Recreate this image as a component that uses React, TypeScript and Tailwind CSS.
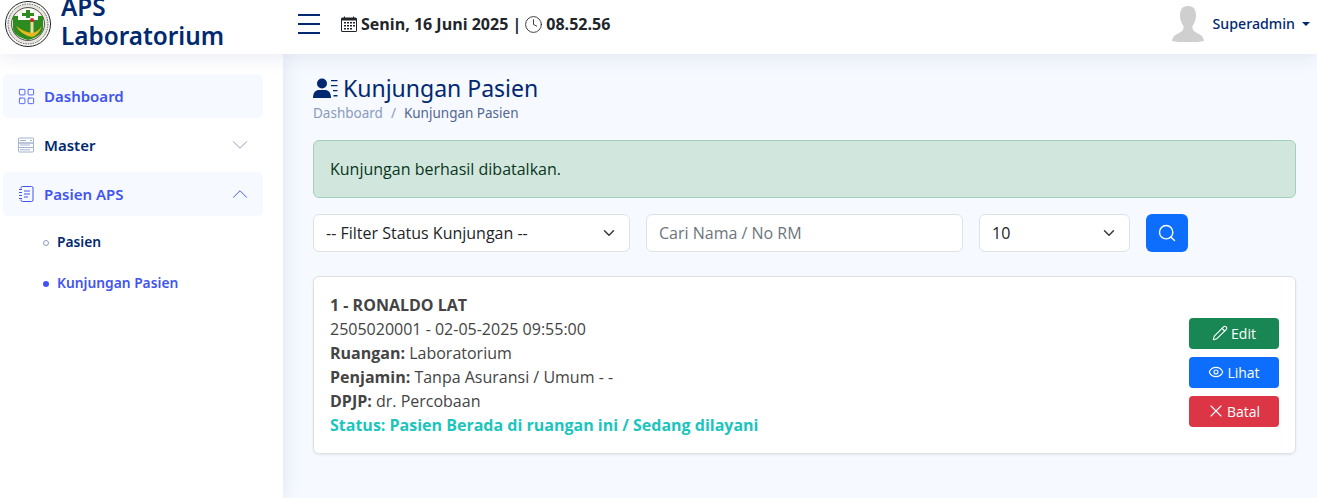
import React from "react";
import { LayoutGrid, ChevronDown, ChevronUp, Search, Pencil, Eye, X, Clock } from "lucide-react";

const nunito = "[font-family:'Noto_Sans','Open_Sans',sans-serif]";

function Logo() {
  return (
    <svg width="46" height="46" viewBox="0 0 46 46" className="shrink-0">
      <circle cx="23" cy="23" r="22.5" fill="#fff" stroke="#222" strokeWidth="1" />
      <circle cx="23" cy="23" r="20" fill="#e8e6de" stroke="#555" strokeWidth="1" strokeDasharray="1.5 1" />
      <circle cx="23" cy="23" r="16.5" fill="#f3efe2" stroke="#333" strokeWidth="0.8" />
      <path d="M8 15 H38 V27 Q38 35 23 39 Q8 35 8 27 Z" fill="#2e8b1f" />
      <path d="M18 8 h10 v4 h5 v7 h-20 v-7 h5 z" fill="#fff" />
      <path d="M21 9 h4 v3 h4 v3 h-4 v2 h-4 v-2 h-4 v-3 h4 z" fill="#2e8b1f" />
      <circle cx="27" cy="19" r="2" fill="#d8232a" />
      <rect x="25.5" y="21" width="3" height="11" fill="#e8dca0" />
      <path d="M11 25 Q19 31 27 32 Q33 31 37 25 Q34 34 27 36 Q16 34 11 25 Z" fill="#e8b71c" />
    </svg>
  );
}

function Avatar() {
  return (
    <svg width="32" height="36" viewBox="0 0 32 36">
      <path d="M16 0 C10 0 8 4 8 10 C8 14 10 18 11.5 20 C12 23 11 25 7 27 C3 29 1 30 0 35 Q16 38 32 35 C31 30 29 29 25 27 C21 25 20 23 20.5 20 C22 18 24 14 24 10 C24 4 22 0 16 0 Z" fill="#cfcfcf" />
    </svg>
  );
}

function CalendarIcon() {
  return (
    <svg width="16" height="16" viewBox="0 0 16 16" fill="#212529">
      <path d="M3 0.5h1v1h8v-1h1v1h1.5A1.5 1.5 0 0 1 16 3v11.5a1.5 1.5 0 0 1-1.5 1.5h-13A1.5 1.5 0 0 1 0 14.5V3a1.5 1.5 0 0 1 1.5-1.5H3zM1 4.5v10a.5.5 0 0 0 .5.5h13a.5.5 0 0 0 .5-.5v-10z" />
      <path d="M3 6h2v1.5H3zM6 6h2v1.5H6zM9 6h2v1.5H9zM12 6h2v1.5h-2zM3 9h2v1.5H3zM6 9h2v1.5H6zM9 9h2v1.5H9zM12 9h2v1.5h-2zM3 12h2v1.5H3zM6 12h2v1.5H6zM9 12h2v1.5H9z" />
    </svg>
  );
}

function ServerIcon() {
  return (
    <svg width="16" height="16" viewBox="0 0 16 16" fill="none" stroke="#a3b1cc" strokeWidth="1">
      <rect x="0.5" y="1" width="15" height="5" rx="1" />
      <rect x="0.5" y="6" width="15" height="4.5" />
      <rect x="0.5" y="10.5" width="15" height="4.5" rx="1" />
      <path d="M2 3.5h6M2 8h10M2 12.8h10M12 3.5h2" />
    </svg>
  );
}

function JournalIcon() {
  return (
    <svg width="16" height="16" viewBox="0 0 16 16" fill="none" stroke="#4154f1" strokeWidth="1">
      <path d="M3 2.5V2a1.5 1.5 0 0 1 1.5-1.5h9A1.5 1.5 0 0 1 15 2v12a1.5 1.5 0 0 1-1.5 1.5h-9A1.5 1.5 0 0 1 3 14v-.5" />
      <path d="M6 5h6M6 8h6M6 11h4M1 3.5h3M1 6.5h3M1 9.5h3M1 12.5h3" />
    </svg>
  );
}

function UserListIcon() {
  return (
    <svg width="26" height="21" viewBox="0 0 26 21" fill="#012970">
      <circle cx="9" cy="5.5" r="5" />
      <path d="M0 20 C0 14 3 12 6 12 H12 C15 12 18 14 18 20 Z" />
      <path d="M18 2h6.5v1.3H18zM18 7h6.5v1.3H18zM20 12h4.5v1.3H20zM20.5 17h4v1.5h-4z" />
    </svg>
  );
}

function Hamburger() {
  return (
    <div className="flex flex-col gap-[7px] w-[22px]">
      <span className="h-[2px] bg-[#012970]" />
      <span className="h-[2px] bg-[#012970]" />
      <span className="h-[2px] bg-[#012970]" />
    </div>
  );
}

function NavItem({ icon, label, active, open }: { icon: React.ReactNode; label: string; active?: boolean; open?: boolean }) {
  return (
    <div className={`h-[44px] rounded-[5px] flex items-center pl-[15px] pr-[15px] gap-[10px] text-[15px] font-semibold ${nunito} ${active ? "bg-[#f6f9ff] text-[#4154f1]" : "bg-white text-[#012970]"}`}>
      <span className="w-[16px] flex justify-center">{icon}</span>
      <span className="flex-1">{label}</span>
      {open === true && <ChevronUp size={26} strokeWidth={0.9} color="#4154f1" className="-mr-[5px] -my-[5px]" />}
      {open === false && <ChevronDown size={26} strokeWidth={0.9} color="#899bbd" className="-mr-[5px] -my-[5px]" />}
    </div>
  );
}

function SubItem({ label, active }: { label: string; active?: boolean }) {
  return (
    <div className={`h-[41px] flex items-center pl-[40px] gap-[8px] text-[13.8px] font-semibold ${nunito} ${active ? "text-[#4154f1]" : "text-[#012970]"}`}>
      <span className={`w-[6px] h-[6px] rounded-full ${active ? "bg-[#4154f1]" : "border border-[#899bbd]"}`} />
      {label}
    </div>
  );
}

function Chevron() {
  return (
    <svg width="16" height="12" viewBox="0 0 16 16" fill="none" stroke="#343a40" strokeWidth="2" strokeLinecap="round" strokeLinejoin="round">
      <path d="M2 5l6 6 6-6" />
    </svg>
  );
}

function ActionBtn({ color, icon, label }: { color: string; icon: React.ReactNode; label: string }) {
  return (
    <div className={`w-[90px] h-[31px] rounded-[4px] flex items-center justify-center gap-[3px] text-[14px] text-white ${color}`}>
      {icon}
      {label}
    </div>
  );
}

export default function App() {
  return (
    <div className="w-[1317px] h-[498px] overflow-hidden bg-[#f6f9ff] text-[#444444] [font-family:'Open_Sans',sans-serif] flex flex-col">
      <header className="h-[54px] shrink-0 bg-white flex items-center shadow-[0_2px_20px_rgba(1,41,112,0.1)] relative z-10 pl-[5px] pr-[7px] pb-[6px]">
        <Logo />
        <div className={`ml-[10px] w-[237px] text-[24.3px] leading-[29px] font-semibold text-[#012970] ${nunito} -mt-[7px]`}>
          APS<br />Laboratorium
        </div>
        <Hamburger />
        <div className="ml-[21px] flex items-center gap-[4px] text-[16px] font-bold text-[#212529]">
          <CalendarIcon />
          <span>Senin, 16 Juni 2025 |</span>
          <Clock size={19} strokeWidth={1.1} className="-mx-[1px]" />
          <span>08.52.56</span>
        </div>
        <div className="ml-auto flex items-center">
          <Avatar />
          <span className={`ml-[9px] text-[14.2px] font-medium text-[#012970] ${nunito}`}>Superadmin</span>
          <span className="ml-[7px] w-0 h-0 border-x-[4px] border-x-transparent border-t-[4px] border-t-[#012970]" />
        </div>
      </header>
      <div className="flex flex-1 min-h-0">
        <aside className="w-[283px] shrink-0 bg-white pt-[20px] px-[3px] pr-[20px] shadow-[0_0_20px_rgba(1,41,112,0.1)] flex flex-col gap-[5px]">
          <NavItem icon={<LayoutGrid size={19} strokeWidth={1.1} color="#4154f1" className="-m-[2px]" />} label="Dashboard" active />
          <NavItem icon={<ServerIcon />} label="Master" open={false} />
          <NavItem icon={<JournalIcon />} label="Pasien APS" active open />
          <div className="mt-[1px]">
            <SubItem label="Pasien" />
            <SubItem label="Kunjungan Pasien" active />
          </div>
        </aside>
        <main className="flex-1 pt-[20px] pl-[30px] pr-[21px]">
          <h1 className={`flex items-center gap-[4px] text-[23px] leading-[28px] font-normal text-[#012970] ${nunito}`}>
            <UserListIcon />
            Kunjungan Pasien
          </h1>
          <div className={`mt-[1px] text-[13.5px] leading-[21px] text-[#899bbd] ${nunito} flex gap-[8px]`}>
            <span>Dashboard</span>
            <span>/</span>
            <span className="text-[#51678f]">Kunjungan Pasien</span>
          </div>
          <div className="mt-[16px] h-[58px] rounded-[6px] border border-[#a3cfbb] bg-[#d1e7dd] flex items-center px-[16px] text-[16px] text-[#0a3622]">
            Kunjungan berhasil dibatalkan.
          </div>
          <div className="mt-[16px] flex gap-[16px] h-[38px] text-[16px]">
            <div className="w-[317px] bg-white border border-[#dee2e6] rounded-[6px] flex items-center justify-between pl-[12px] pr-[12px] text-[#212529]">
              -- Filter Status Kunjungan --
              <Chevron />
            </div>
            <div className="w-[317px] bg-white border border-[#dee2e6] rounded-[6px] flex items-center pl-[12px] text-[#6c757d]">
              Cari Nama / No RM
            </div>
            <div className="w-[151px] bg-white border border-[#dee2e6] rounded-[6px] flex items-center justify-between pl-[12px] pr-[12px] text-[#212529]">
              10
              <Chevron />
            </div>
            <div className="w-[42px] bg-[#0d6efd] rounded-[6px] flex items-center justify-center">
              <Search size={20} strokeWidth={1.7} color="#fff" />
            </div>
          </div>
          <div className="mt-[24px] h-[178px] bg-white border border-[#dee2e6] rounded-[6px] shadow-[0_1px_3px_rgba(0,0,0,0.08)] flex items-center justify-between pl-[16px] pr-[16px]">
            <div className="text-[16px] leading-[24px]">
              <div className="font-bold">1 - RONALDO LAT</div>
              <div>2505020001 - 02-05-2025 09:55:00</div>
              <div><b>Ruangan:</b> Laboratorium</div>
              <div><b>Penjamin:</b> Tanpa Asuransi / Umum - -</div>
              <div><b>DPJP:</b> dr. Percobaan</div>
              <div className="font-bold text-[#1bc5bd]">Status: Pasien Berada di ruangan ini / Sedang dilayani</div>
            </div>
            <div className="flex flex-col gap-[8px] mt-[14px]">
              <ActionBtn color="bg-[#198754]" icon={<Pencil size={16} strokeWidth={1.6} />} label="Edit" />
              <ActionBtn color="bg-[#0d6efd]" icon={<Eye size={16} strokeWidth={1.7} />} label="Lihat" />
              <ActionBtn color="bg-[#dc3545]" icon={<X size={20} strokeWidth={1.3} className="-mx-[2px]" />} label="Batal" />
            </div>
          </div>
        </main>
      </div>
    </div>
  );
}
